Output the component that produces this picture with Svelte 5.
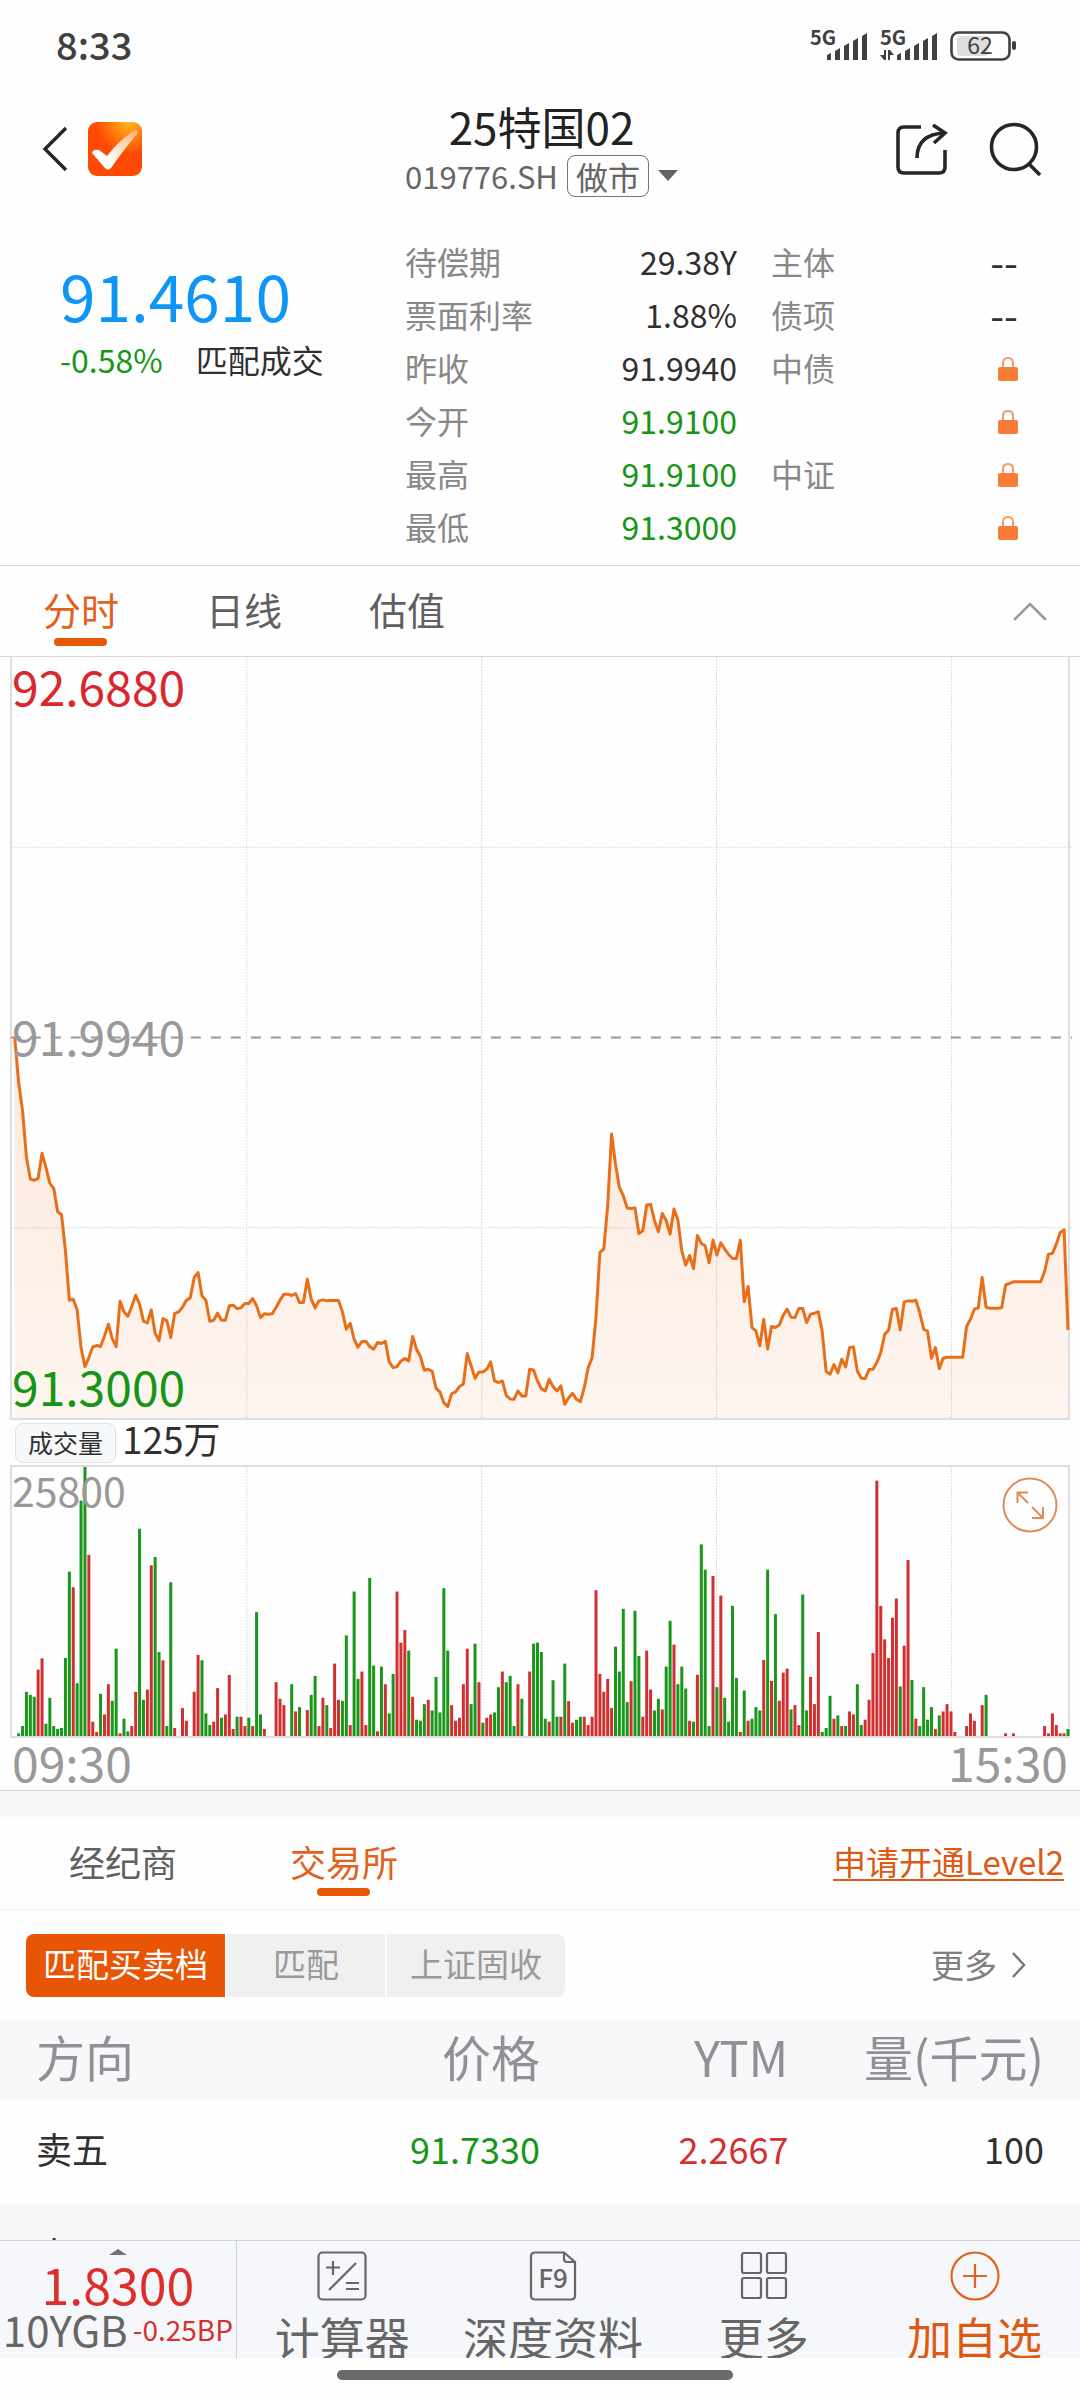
<script>
    // one point per minute, 0 = day low, 1140 = previous close
    const prices = [
        1138, 1006, 921, 781, 716, 712, 718, 793, 751, 703, 688, 618, 609, 501, 353, 356, 324, 211, 154, 181,
        213, 217, 214, 246, 281, 238, 214, 350, 318, 305, 334, 368, 341, 290, 285, 324, 253, 232, 298, 291,
        241, 313, 318, 332, 353, 360, 421, 436, 366, 353, 290, 293, 314, 293, 293, 336, 338, 328, 330, 343,
        343, 358, 336, 301, 312, 311, 312, 331, 353, 371, 371, 367, 373, 346, 346, 416, 356, 330, 351, 354,
        351, 352, 352, 352, 318, 266, 284, 236, 212, 229, 230, 214, 206, 226, 223, 230, 168, 151, 154, 171,
        178, 171, 244, 206, 184, 143, 146, 140, 89, 78, 46, 34, 73, 78, 94, 102, 193, 156, 119, 138,
        138, 146, 168, 111, 106, 111, 68, 57, 56, 81, 66, 66, 146, 144, 111, 88, 81, 116, 94, 81,
        96, 41, 61, 74, 56, 49, 91, 151, 180, 301, 496, 506, 636, 851, 761, 691, 666, 629, 628, 629,
        553, 561, 638, 640, 591, 558, 613, 591, 551, 626, 593, 501, 458, 487, 448, 547, 523, 516, 465, 533,
        488, 525, 506, 490, 478, 478, 533, 348, 394, 271, 261, 216, 296, 207, 274, 271, 279, 308, 326, 302,
        301, 328, 328, 286, 311, 314, 318, 259, 139, 131, 160, 135, 176, 153, 211, 213, 141, 119, 118, 145,
        146, 166, 196, 251, 263, 326, 328, 264, 348, 351, 350, 353, 316, 266, 260, 179, 211, 148, 179, 182,
        182, 182, 182, 182, 274, 296, 326, 330, 421, 332, 329, 329, 329, 330, 399, 403, 408, 408, 408, 408,
        408, 408, 408, 408, 439, 491, 493, 521, 556, 564, 264
    ]

    // volume per minute, negative = price went down
    const volumes = [
        0, -8, -30, -133, -124, -118, 200, 234, -37, -115, -30, -21, -24, -235, -495, 448, -159, -709, -810, 545,
        43, 12, -127, 65, 156, -106, -263, 8, -52, -14, 30, 133, -624, -109, 140, 514, -539, -253, 228, -30,
        -463, 24, 0, 84, 46, 0, 133, 244, -228, -68, -33, 43, 144, -55, 65, 184, 21, -58, 58, 30,
        -55, 30, -373, -65, 21, 0, 0, 162, 112, 93, 0, -156, 74, -87, 0, 78, -124, -181, 30, 115,
        -93, 24, 218, 109, -106, -303, 33, -435, -172, 194, 33, -476, -212, 14, -209, 156, -68, -187, 435, 281,
        319, -257, 118, -49, -46, -96, 109, -77, -178, -71, -445, -257, 93, 46, 55, 156, 263, -96, -278, 162,
        -40, 55, 65, -71, -147, 194, -162, -181, -30, 156, -112, 0, 194, -278, -281, -253, -52, 43, -168, -58,
        58, -218, 105, 40, -49, -58, 58, 33, 58, 439, 187, 133, 172, 84, -269, -194, -383, -102, 165, -377,
        -241, 58, 257, 140, -77, -112, 80, -209, -347, 275, -156, -209, -143, 46, -43, 184, -577, -501, -30, 482,
        -147, 423, -115, -43, -392, -175, 12, -137, 46, -52, -87, -77, 229, -501, 166, -367, 106, 191, 203, -80,
        93, 33, -426, -77, 178, 96, 313, -12, -24, -121, 52, -62, 30, -30, 74, 65, -156, -33, 49, 109,
        250, 769, 392, 291, 235, 356, 414, -149, 272, 530, -169, 52, -30, -147, -49, -87, 21, -62, 74, 96,
        74, 12, 0, 0, 30, 68, 46, 0, 93, -124, 0, 0, 0, 0, 8, 0, 8, 0, 0, 0,
        0, 0, 0, 0, 30, 8, 68, 33, 8, 8, -21
    ]

    const line = prices.map((p, i) => i + ',' + (2280 - p)).join(' ')
    const area = '0,2280 ' + line + ' 270,2280'
    const bars = volumes.map((v, i) => ({ x: i, h: Math.abs(v), down: v < 0 })).filter(b => b.h > 0)

    const grid = [1, 2, 3, 4].map(n => n * 60.2 - 0.7)

    const stats = [
        { label: '待偿期', value: '29.38Y' },
        { label: '票面利率', value: '1.88%' },
        { label: '昨收', value: '91.9940' },
        { label: '今开', value: '91.9100', down: true },
        { label: '最高', value: '91.9100', down: true },
        { label: '最低', value: '91.3000', down: true }
    ]

    const ratings = [
        { label: '主体', value: '--' },
        { label: '债项', value: '--' },
        { label: '中债' },
        { label: '' },
        { label: '中证' },
        { label: '' }
    ]

    const chartTabs = ['分时', '日线', '估值']
    const marketTabs = ['经纪商', '交易所']
    const segments = ['匹配买卖档', '匹配', '上证固收']

    let chartTab = $state('分时')
    let marketTab = $state('交易所')
    let segment = $state('匹配买卖档')

    const orders = [
        { side: '卖五', price: '91.7330', ytm: '2.2667', amount: '100' },
        { side: '卖四', price: '', ytm: '', amount: '' }
    ]
</script>

{#snippet signal(active)}
    <svg class="signal" width="59" height="32" viewBox="0 0 59 32">
        <text x="0" y="15" font-size="20" font-weight="700">5G</text>
        <path d="M17 30v-5l4-2v7zM25 30v-9l5-3v12zM34 30v-14l5-3v17zM43 30v-19l5-3v22zM52 30v-24l5-3v27z" />
        {#if active}
            <path d="M4 20h2v10h-2l-4-5h4zM8 30v-10h2l4 5h-4v5z" />
        {/if}
    </svg>
{/snippet}

<div class="app">
    <div class="status">
        <span class="clock">8:33</span>
        <div class="status-icons">
            {@render signal(false)}
            {@render signal(true)}
            <svg width="66" height="30" viewBox="0 0 66 30">
                <rect x="7" y="5" width="31" height="20" rx="3" fill="#dedede" />
                <rect x="1.5" y="1.5" width="58" height="27" rx="7" fill="none" stroke="#404040" stroke-width="2.6" />
                <rect x="62" y="10" width="4" height="9" rx="2" fill="#404040" />
                <text x="30" y="23" font-size="23" text-anchor="middle" fill="#404040">62</text>
            </svg>
        </div>
    </div>

    <header>
        <div class="left">
            <button aria-label="返回">
                <svg width="26" height="46" viewBox="0 0 26 46" fill="none" stroke="#262626" stroke-width="3.4">
                    <path d="M25 2L4 23l21 21" />
                </svg>
            </button>
            <svg width="54" height="54" viewBox="0 0 54 54">
                <defs>
                    <radialGradient id="logo" cx="0.75" cy="0" r="0.6">
                        <stop offset="0" stop-color="#ffb81c" />
                        <stop offset="1" stop-color="#fe4a02" />
                    </radialGradient>
                    <linearGradient id="tick" x1="0" y1="1" x2="1" y2="0">
                        <stop offset="0.3" stop-color="#fff" />
                        <stop offset="1" stop-color="#ffb27a" />
                    </linearGradient>
                </defs>
                <rect width="54" height="54" rx="9" fill="url(#logo)" />
                <path d="M4 31q1-4 7-3l8 6q12-16 27-25q5-2 3 3q-15 18-26 34q-3 3-6 0z" fill="url(#tick)" />
            </svg>
        </div>
        <div class="title">
            <h1>25特国02</h1>
            <button class="code">
                019776.SH
                <span class="tag">做市</span>
                <svg width="20" height="11" viewBox="0 0 20 11"><path d="M0 0h20L10 11z" fill="#666" /></svg>
            </button>
        </div>
        <div class="right">
            <button aria-label="分享">
                <svg width="52" height="54" viewBox="0 0 52 54" fill="none" stroke="#262626" stroke-width="3.6">
                    <path d="M25 5H8q-6 0-6 6v34q0 6 6 6h35q6 0 6-6V28" />
                    <path d="M21 36q0-24 28-25M37 3l12 8l-11 10" />
                </svg>
            </button>
            <button aria-label="搜索">
                <svg width="52" height="54" viewBox="0 0 52 54" fill="none" stroke="#262626" stroke-width="3.6">
                    <circle cx="24" cy="25" r="22.5" />
                    <path d="M38 41l12 12" />
                </svg>
            </button>
        </div>
    </header>

    <main>
        <section class="quote">
            <div class="last">
                <div class="price">91.4610</div>
                <div class="change"><span class="down">-0.58%</span><span>匹配成交</span></div>
            </div>
            <div class="stats">
                {#each stats as s}
                    <div class="row">
                        <span class="label">{s.label}</span>
                        <span class:down={s.down}>{s.value}</span>
                    </div>
                {/each}
            </div>
            <div class="ratings">
                {#each ratings as r}
                    <div class="row">
                        <span class="label">{r.label}</span>
                        {#if r.value}
                            <span class="dashes">{r.value}</span>
                        {:else}
                            <svg width="20" height="24" viewBox="0 0 20 24">
                                <path d="M5 11V6q0-5 5-5t5 5v5" fill="none" stroke="#f79a68" stroke-width="2" />
                                <rect y="10" width="20" height="14" rx="2" fill="#f97b38" />
                            </svg>
                        {/if}
                    </div>
                {/each}
            </div>
        </section>

        <nav class="tabs chart-tabs">
            {#each chartTabs as t}
                <button class:active={chartTab === t} onclick={() => chartTab = t}>{t}</button>
            {/each}
            <button class="fold" aria-label="收起">
                <svg width="32" height="18" viewBox="0 0 32 18" fill="none" stroke="#999" stroke-width="2.6" stroke-linecap="round">
                    <path d="M1 17L16 2l15 15" />
                </svg>
            </button>
        </nav>

        <section class="chart price-chart">
            <svg viewBox="-0.7 0 270.7 2280" preserveAspectRatio="none">
                <defs>
                    <linearGradient id="fill" x1="0" y1="0" x2="0" y2="1">
                        <stop offset="0" stop-color="#f26a10" stop-opacity="0.15" />
                        <stop offset="1" stop-color="#f26a10" stop-opacity="0.06" />
                    </linearGradient>
                </defs>
                {#each grid as x}
                    <line class="dotted" x1={x} x2={x} y1="0" y2="2280" />
                {/each}
                <line class="dotted" x1="-1" x2="271" y1="570" y2="570" />
                <line class="dotted" x1="-1" x2="271" y1="1710" y2="1710" />
                <line class="prev" x1="-1" x2="271" y1="1140" y2="1140" />
                <polygon points={area} fill="url(#fill)" />
                <polyline points={line} />
            </svg>
            <span class="mark high">92.6880</span>
            <span class="mark mid">91.9940</span>
            <span class="mark low">91.3000</span>
        </section>

        <div class="volume-head">
            <button>成交量</button>
            <span>125万</span>
        </div>

        <section class="chart volume-chart">
            <svg viewBox="-0.7 0 270.7 810" preserveAspectRatio="none">
                {#each grid as x}
                    <line class="dotted" x1={x} x2={x} y1="0" y2="810" />
                {/each}
                {#each bars as b}
                    <line class="bar" class:fall={b.down} x1={b.x} x2={b.x} y1={810 - b.h} y2="810" />
                {/each}
            </svg>
            <span class="mark max">25800</span>
            <button class="expand" aria-label="全屏">
                <svg width="56" height="56" viewBox="0 0 56 56" fill="none" stroke="#e08b5b" stroke-width="2">
                    <circle cx="28" cy="28" r="26.5" />
                    <path d="M26 26L16 16M15.5 26V15.5H26M30 30l11 11M30 41h11V30" />
                </svg>
            </button>
        </section>

        <div class="times"><span>09:30</span><span>15:30</span></div>

        <nav class="tabs market-tabs">
            {#each marketTabs as t}
                <button class:active={marketTab === t} onclick={() => marketTab = t}>{t}</button>
            {/each}
            <a href="#level2">申请开通Level2</a>
        </nav>

        <div class="filters">
            <div class="segments">
                {#each segments as s}
                    <button class:active={segment === s} onclick={() => segment = s}>{s}</button>
                {/each}
            </div>
            <button class="more">
                <span>更多</span>
                <svg width="14" height="26" viewBox="0 0 14 26" fill="none" stroke="#777" stroke-width="2.4">
                    <path d="M1 1l11 12L1 25" />
                </svg>
            </button>
        </div>

        <table>
            <thead>
                <tr><th>方向</th><th>价格</th><th>YTM</th><th>量(千元)</th></tr>
            </thead>
            <tbody>
                {#each orders as o}
                    <tr>
                        <td>{o.side}</td>
                        <td class="down">{o.price}</td>
                        <td class="up">{o.ytm}</td>
                        <td>{o.amount}</td>
                    </tr>
                {/each}
            </tbody>
        </table>
    </main>

    <footer>
        <button class="bond">
            <svg width="18" height="6" viewBox="0 0 18 6"><path d="M0 6L9 0l9 6z" fill="#737478" /></svg>
            <span class="rate">1.8300</span>
            <span class="name">10YGB<small>-0.25BP</small></span>
        </button>
        <button>
            <svg width="50" height="50" viewBox="0 0 50 50" fill="none" stroke="#666" stroke-width="2.2">
                <rect x="1.5" y="1.5" width="47" height="47" rx="4" />
                <path d="M9 16.5h14M16 10v14M12 39l27-27M29 32h13M29 38h13" />
            </svg>
            计算器
        </button>
        <button>
            <svg width="50" height="50" viewBox="0 0 50 50" fill="none" stroke="#666" stroke-width="2.2">
                <path d="M36 1.5H7q-4 0-4 4v39q0 4 4 4h36q4 0 4-4V11zV8q0 3 3 3h8" />
                <text x="25" y="37" font-size="26" font-weight="500" text-anchor="middle" fill="#666" stroke="none">F9</text>
            </svg>
            深度资料
        </button>
        <button>
            <svg width="50" height="50" viewBox="0 0 50 50" fill="none" stroke="#666" stroke-width="2.2">
                <rect x="3" y="2" width="19" height="20" rx="2" />
                <rect x="28" y="2" width="19" height="20" rx="2" />
                <rect x="3" y="27" width="19" height="20" rx="2" />
                <rect x="28" y="27" width="19" height="20" rx="2" />
            </svg>
            更多
        </button>
        <button class="add">
            <svg width="50" height="50" viewBox="0 0 50 50" fill="none" stroke="#e0621c" stroke-width="2.2">
                <circle cx="25" cy="25" r="23.5" />
                <path d="M13 25h24M25 13v24" />
            </svg>
            加自选
        </button>
    </footer>
    <div class="home"><i></i></div>
</div>

<style>
    :global(body) {
        margin: 0;
        background: #fff;
    }

    .app {
        display: flex;
        flex-direction: column;
        height: 100vh;
        font-family: "Noto Sans CJK SC", "Noto Sans", sans-serif;
        font-size: 32px;
        color: #303030;
        background: #fefefe;
    }

    button {
        font: inherit;
        color: inherit;
        background: none;
        border: 0;
        padding: 0;
        cursor: pointer;
    }

    svg {
        display: block;
        flex: none;
        overflow: visible;
    }

    .down {
        color: #169616;
    }

    .up {
        color: #d43030;
    }

    .status {
        display: flex;
        justify-content: space-between;
        align-items: center;
        height: 92px;
        padding: 0 64px 0 56px;
        color: #404040;
    }

    .clock {
        padding-bottom: 4px;
        font-size: 38px;
        font-weight: 500;
        line-height: 40px;
    }

    .status-icons {
        display: flex;
        align-items: center;
        gap: 11px;
    }

    .signal {
        fill: #404040;
    }

    header {
        display: grid;
        grid-template-columns: 1fr auto 1fr;
        align-items: center;
        height: 114px;
        padding: 0 38px 0 41px;
    }

    .left, .right {
        display: flex;
        align-items: center;
        gap: 21px;
    }

    .right {
        justify-content: flex-end;
        gap: 42px;
    }

    .title {
        display: flex;
        flex-direction: column;
        align-items: center;
        gap: 5px;
    }

    h1 {
        margin: 0;
        font-size: 44px;
        font-weight: 400;
        line-height: 48px;
        color: #222;
    }

    .code {
        display: flex;
        align-items: center;
        gap: 9px;
        font-size: 31px;
        line-height: 40px;
        color: #666;
    }

    .tag {
        padding: 0 8px;
        border: 1px solid #777;
        border-radius: 8px;
        font-size: 32px;
    }

    main {
        flex: 1;
        min-height: 0;
        overflow-y: auto;
        scrollbar-width: none;
    }

    .quote {
        display: grid;
        grid-template-columns: 345fr 332fr 281fr;
        padding: 30px 62px 11px 60px;
        border-bottom: 1px solid #d9d9d9;
    }

    .price {
        margin-top: 22px;
        font-size: 64px;
        line-height: 72px;
        color: #0d96f8;
    }

    .change {
        display: flex;
        gap: 33px;
        margin-top: 9px;
        line-height: 40px;
    }

    .ratings {
        padding-left: 34px;
    }

    .row {
        display: flex;
        justify-content: space-between;
        align-items: center;
        height: 53px;
        line-height: 50px;
    }

    .row span {
        padding-bottom: 3px;
    }

    .label {
        color: #888;
    }

    .dashes {
        font-size: 40px;
    }

    .tabs {
        display: flex;
        align-items: stretch;
        height: 90px;
        border-bottom: 1px solid #d9d9d9;
        color: #606060;
    }

    .tabs button {
        position: relative;
        padding-bottom: 5px;
    }

    .tabs .active {
        color: #e0621c;
    }

    .tabs .active::after {
        content: "";
        position: absolute;
        left: 50%;
        bottom: 10px;
        width: 53px;
        height: 8px;
        margin-left: -27px;
        border-radius: 4px;
        background: #e85804;
    }

    .chart-tabs {
        gap: 87px;
        padding: 0 34px 0 43px;
        font-size: 38px;
    }

    .tabs .fold {
        margin-left: auto;
        padding: 0;
    }

    .chart {
        position: relative;
        margin: 0 10px;
        border: 2px solid #dedede;
    }

    .chart > svg {
        width: 100%;
        height: 100%;
    }

    .chart line, .chart polyline {
        fill: none;
        vector-effect: non-scaling-stroke;
    }

    .price-chart {
        height: 761px;
        border-top: 0;
    }

    .price-chart polyline {
        stroke: #e86f1a;
        stroke-width: 3;
        stroke-linejoin: round;
    }

    .dotted {
        stroke: #ddd;
        stroke-width: 1;
        stroke-dasharray: 2 1;
    }

    .prev {
        stroke: #999;
        stroke-width: 2;
        stroke-dasharray: 10 10;
    }

    .mark {
        position: absolute;
        left: 0;
        font-size: 48px;
        line-height: 52px;
        color: #999;
    }

    .high {
        top: 2px;
        color: #d8282e;
    }

    .mid {
        top: 50%;
        margin-top: -29px;
    }

    .low {
        bottom: 7px;
        color: #149614;
    }

    .volume-head {
        display: flex;
        align-items: center;
        gap: 6px;
        height: 45px;
        padding: 0 15px;
        font-size: 37px;
        line-height: 38px;
    }

    .volume-head button {
        padding: 0 12px 2px;
        border: 1px solid #dfe1e5;
        border-radius: 8px;
        background: #f7f8fa;
        font-size: 25px;
        line-height: 36px;
    }

    .volume-head span {
        padding-bottom: 10px;
    }

    .volume-chart {
        height: 269px;
    }

    .bar {
        stroke: #d13030;
        stroke-width: 3;
    }

    .fall {
        stroke: #1a961a;
    }

    .max {
        top: -4px;
        font-size: 41px;
    }

    .expand {
        position: absolute;
        top: 10px;
        right: 10px;
    }

    .times {
        display: flex;
        justify-content: space-between;
        height: 52px;
        padding: 0 12px;
        border-bottom: 1px solid #d3d5da;
        font-size: 48px;
        line-height: 46px;
        color: #999;
    }

    .market-tabs {
        align-items: center;
        gap: 113px;
        height: 92px;
        padding: 0 16px 0 69px;
        border-top: 26px solid #f7f8fa;
        border-bottom-color: #f2f2f2;
        font-size: 36px;
    }

    .market-tabs button {
        height: 100%;
    }

    .market-tabs .active::after {
        bottom: 13px;
    }

    .market-tabs a {
        margin-left: auto;
        padding-bottom: 5px;
        font-size: 33px;
        color: #dc5a14;
        text-decoration-thickness: 2px;
        text-underline-offset: 4px;
    }

    .filters {
        display: flex;
        justify-content: space-between;
        align-items: center;
        height: 110px;
        padding: 0 54px 0 26px;
        font-size: 33px;
        color: #808080;
    }

    .segments {
        display: flex;
        gap: 2px;
        border-radius: 8px;
        overflow: hidden;
    }

    .segments button {
        height: 63px;
        padding: 0 23px 4px;
        background: #f0f0f0;
        color: #999;
    }

    .segments button:first-child {
        padding: 0 17px 4px;
    }

    .segments button:nth-child(2) {
        padding: 0 46px 4px;
    }

    .segments .active {
        background: #e85605;
        color: #fff;
    }

    .more {
        display: flex;
        align-items: center;
        gap: 15px;
    }

    .more span {
        padding-bottom: 3px;
    }

    table {
        width: 100%;
        table-layout: fixed;
        border-collapse: collapse;
    }

    th, td {
        box-sizing: border-box;
        padding: 0 0 7px;
        font-weight: 400;
        text-align: right;
    }

    th {
        width: 23%;
        height: 79px;
        background: #f7f8fa;
        font-size: 49px;
        line-height: 52px;
        color: #909194;
    }

    td {
        height: 105px;
        font-size: 36px;
        line-height: 40px;
    }

    tbody tr:nth-child(even) {
        background: #f7f8fa;
    }

    th:first-child, td:first-child {
        width: 27%;
        padding-left: 36px;
        text-align: left;
    }

    th:last-child, td:last-child {
        width: 27%;
        padding-right: 36px;
    }

    footer {
        display: grid;
        grid-template-columns: 237fr repeat(4, 211fr);
        height: 117px;
        overflow: hidden;
        border-top: 1px solid #d0d4dc;
        background: #f6f7fa;
        color: #666;
    }

    footer button {
        display: flex;
        flex-direction: column;
        align-items: center;
        gap: 10px;
        min-width: 0;
        padding-top: 10px;
        font-size: 45px;
        line-height: 52px;
        white-space: nowrap;
    }

    .add {
        color: #dc5a14;
    }

    .bond {
        gap: 0;
        padding-top: 8px;
        border-right: 1px solid #d0d4dc;
    }

    .rate {
        margin-top: 2px;
        font-size: 50px;
        color: #dc2f2c;
    }

    .name {
        display: flex;
        align-items: center;
        gap: 5px;
        font-size: 42px;
        line-height: 40px;
    }

    small {
        font-size: 28px;
        color: #d43030;
    }

    .home {
        display: flex;
        justify-content: center;
        height: 30px;
        padding: 12px 10px 0 0;
    }

    .home i {
        width: 37%;
        height: 10px;
        border-radius: 5px;
        background: #6a6a6a;
    }
</style>
